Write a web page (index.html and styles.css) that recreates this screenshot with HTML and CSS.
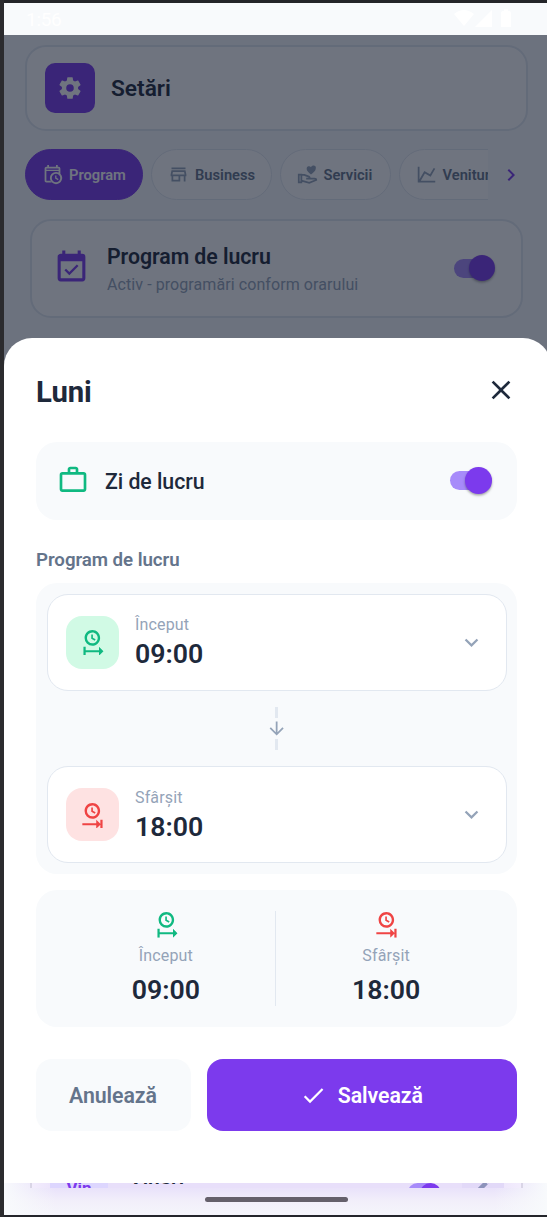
FILE: index.html
```html
<!DOCTYPE html>
<html lang="ro">
<head>
<meta charset="utf-8">
<title>Setări</title>
<link rel="stylesheet" href="styles.css">
</head>
<body>
<svg class="defs" aria-hidden="true">
  <symbol id="clock-start" viewBox="0 0 24 24"><path d="M12 1C8.14 1 5 4.14 5 8A7 7 0 0 0 12 15C15.86 15 19 11.87 19 8C19 4.14 15.86 1 12 1M12 3.15C14.67 3.15 16.85 5.32 16.85 8C16.85 10.68 14.67 12.85 12 12.85A4.85 4.85 0 0 1 7.15 8A4.85 4.85 0 0 1 12 3.15M11 5V8.69L14.19 10.53L14.94 9.23L12.5 7.82V5M4 16V24H6V21H18V24L22 20L18 16V19H6V16"/></symbol>
  <symbol id="clock-end" viewBox="0 0 24 24"><path d="M12 1C8.14 1 5 4.14 5 8A7 7 0 0 0 12 15C15.86 15 19 11.87 19 8C19 4.14 15.86 1 12 1M12 3.15C14.67 3.15 16.85 5.32 16.85 8C16.85 10.68 14.67 12.85 12 12.85A4.85 4.85 0 0 1 7.15 8A4.85 4.85 0 0 1 12 3.15M11 5V8.69L14.19 10.53L14.94 9.23L12.5 7.82V5M3 19H15.5V16L19.2 19.6V16H21.2V24H19.2V20.4L15.5 24V21H3Z"/></symbol>
  <symbol id="chevron-down" viewBox="0 0 24 24"><path d="M7.41,8.58L12,13.17L16.59,8.58L18,10L12,16L6,10L7.41,8.58Z"/></symbol>
</svg>
<div class="phone">
  <header class="status">
    <span class="time">1:56</span>
    <svg class="signals" viewBox="0 0 60 20"><path d="M0 5Q10-3 20 5L10 17ZM21 18L38 1V18ZM47 4Q47 2 49 2H50V.5H54V2H55Q57 2 57 4V18H47Z"/></svg>
  </header>
  <main class="page">
    <section class="title-card">
      <span class="gear"><svg viewBox="0 0 24 24"><path d="M12,15.5A3.5,3.5 0 0,1 8.5,12A3.5,3.5 0 0,1 12,8.5A3.5,3.5 0 0,1 15.5,12A3.5,3.5 0 0,1 12,15.5M19.43,12.97C19.47,12.65 19.5,12.33 19.5,12C19.5,11.67 19.47,11.34 19.43,11L21.54,9.37C21.73,9.22 21.78,8.95 21.66,8.73L19.66,5.27C19.54,5.05 19.27,4.96 19.05,5.05L16.56,6.05C16.04,5.66 15.5,5.32 14.87,5.07L14.5,2.42C14.46,2.18 14.25,2 14,2H10C9.75,2 9.54,2.18 9.5,2.42L9.13,5.07C8.5,5.32 7.96,5.66 7.44,6.05L4.95,5.05C4.73,4.96 4.46,5.05 4.34,5.27L2.34,8.73C2.21,8.95 2.27,9.22 2.46,9.37L4.57,11C4.53,11.34 4.5,11.67 4.5,12C4.5,12.33 4.53,12.65 4.57,12.97L2.46,14.63C2.27,14.78 2.21,15.05 2.34,15.27L4.34,18.73C4.46,18.95 4.73,19.03 4.95,18.95L7.44,17.94C7.96,18.34 8.5,18.68 9.13,18.93L9.5,21.58C9.54,21.82 9.75,22 10,22H14C14.25,22 14.46,21.82 14.5,21.58L14.87,18.93C15.5,18.67 16.04,18.34 16.56,17.94L19.05,18.95C19.27,19.03 19.54,18.95 19.66,18.73L21.66,15.27C21.78,15.05 21.73,14.78 21.54,14.63L19.43,12.97Z"/></svg></span>
      <h1>Setări</h1>
    </section>
    <nav class="tabs">
      <div class="chips">
        <span class="chip active"><svg viewBox="0 0 24 24"><path d="M15,13H16.5V15.82L18.94,17.23L18.19,18.53L15,16.69V13M5,8V19H9.67A7,7 0 0,0 11.1,21H5C3.89,21 3,20.1 3,19V5C3,3.89 3.89,3 5,3H6V1H8V3H16V1H18V3H19A2,2 0 0,1 21,5V11.1A7,7 0 0,1 16,23A7,7 0 0,1 9,16A7,7 0 0,1 16,9C17.07,9 18.09,9.24 19,9.67V8ZM5,5V6.5H19V5ZM16,11.15A4.85,4.85 0 0,0 11.15,16C11.15,18.68 13.32,20.85 16,20.85A4.85,4.85 0 0,0 20.85,16C20.85,13.32 18.68,11.15 16,11.15Z" fill-rule="evenodd"/></svg>Program</span>
        <span class="chip business"><svg viewBox="0 0 24 24"><path d="M18.36 9L18.96 12H5.04L5.64 9H18.36M20 4H4V6H20V4M20 7H4L3 12V14H4V20H14V14H18V20H20V14H21V12L20 7M6 18V14H12V18H6Z"/></svg>Business</span>
        <span class="chip servicii"><svg viewBox="0 0 24 24"><path d="M16 12C13 9.3 11 7.7 11 5.3A2.7 2.7 0 0 1 16 3.8A2.7 2.7 0 0 1 21.4 5.3C21.4 7.7 19 9.3 16 12Z"/><path class="line" d="M2 12H5V21H2ZM5 12.5H8.5L13.5 14.4Q15.2 15.4 14 16.6H10.5M14.5 16.6H20Q22 16.6 22 18.3L14 21.5L5 19"/></svg>Servicii</span>
        <span class="chip venituri"><svg viewBox="0 0 24 24"><path d="M16,11.78L20.24,4.45L21.97,5.45L16.74,14.5L10.23,10.75L5.46,19H22V21H2V3H4V17.54L9.5,8L16,11.78Z"/></svg>Venituri</span>
      </div>
      <svg class="more" viewBox="0 0 24 24"><path d="M8.59,16.58L13.17,12L8.59,7.41L10,6L16,12L10,18L8.59,16.58Z"/></svg>
    </nav>
    <section class="schedule-card">
      <svg class="calendar" viewBox="0 0 24 24"><path d="M19,19H5V8H19M19,3H18V1H16V3H8V1H6V3H5C3.89,3 3,3.9 3,5V19A2,2 0 0,0 5,21H19A2,2 0 0,0 21,19V5A2,2 0 0,0 19,3M16.53,11.06L15.47,10L10.59,14.88L8.47,12.76L7.41,13.82L10.59,17L16.53,11.06Z"/></svg>
      <div class="schedule-text"><h2>Program de lucru</h2><p>Activ - programări conform orarului</p></div>
      <span class="switch"></span>
    </section>
    <div class="scrim"></div>
    <section class="sheet">
      <div class="sheet-head"><h2>Luni</h2><svg viewBox="0 0 24 24"><path d="M19,6.41L17.59,5L12,10.59L6.41,5L5,6.41L10.59,12L5,17.59L6.41,19L12,13.41L17.59,19L19,17.59L13.41,12L19,6.41Z"/></svg></div>
      <div class="workday">
        <svg viewBox="0 0 24 24"><path d="M20,6C20.58,6 21.05,6.2 21.42,6.59C21.8,7 22,7.45 22,8V19C22,19.55 21.8,20 21.42,20.41C21.05,20.8 20.58,21 20,21H4C3.42,21 2.95,20.8 2.58,20.41C2.2,20 2,19.55 2,19V8C2,7.45 2.2,7 2.58,6.59C2.95,6.2 3.42,6 4,6H8V4C8,3.42 8.2,2.95 8.58,2.58C8.95,2.2 9.42,2 10,2H14C14.58,2 15.05,2.2 15.42,2.58C15.8,2.95 16,3.42 16,4V6H20M4,8V19H20V8H4M14,6V4H10V6H14Z"/></svg>
        <span class="workday-label">Zi de lucru</span><span class="switch"></span>
      </div>
      <h3>Program de lucru</h3>
      <div class="hours">
        <div class="slot">
          <span class="tile start"><svg><use href="#clock-start"/></svg></span>
          <div class="slot-text"><small>Început</small><b>09:00</b></div>
          <svg class="chevron"><use href="#chevron-down"/></svg>
        </div>
        <div class="connector"><i></i><svg viewBox="0 0 24 24"><path d="M11,4H13V16L18.5,10.5L19.92,11.92L12,19.84L4.08,11.92L5.5,10.5L11,16V4Z"/></svg><i></i></div>
        <div class="slot">
          <span class="tile end"><svg><use href="#clock-end"/></svg></span>
          <div class="slot-text"><small>Sfârșit</small><b>18:00</b></div>
          <svg class="chevron"><use href="#chevron-down"/></svg>
        </div>
      </div>
      <div class="summary">
        <div class="total start"><svg><use href="#clock-start"/></svg><small>Început</small><b>09:00</b></div>
        <div class="total end"><svg><use href="#clock-end"/></svg><small>Sfârșit</small><b>18:00</b></div>
      </div>
      <div class="actions">
        <button class="cancel">Anulează</button>
        <button class="save"><svg viewBox="0 0 24 24"><path d="M21,7L9,19L3.5,13.5L4.91,12.09L9,16.17L19.59,5.59L21,7Z"/></svg>Salvează</button>
      </div>
    </section>
  </main>
  <footer class="below">
    <div class="peek">
      <div class="peek-row">
        <span class="day">Vin</span><span class="day-name">Vineri</span><span class="switch"></span>
        <span class="edit"><svg viewBox="0 0 24 24"><path d="M3 17.2V21H6.8L17.8 9.9L14 6.2ZM15 5L18.8 8.8L20.7 7Q21.4 6.3 20.7 5.6L18.4 3.3Q17.7 2.6 17 3.3Z"/></svg></span>
      </div>
    </div>
    <div class="home"></div>
  </footer>
</div>
</body>
</html>
```
FILE: styles.css
```css
* { box-sizing: border-box; }
body { margin: 0; width: 547px; height: 1217px; overflow: hidden; background: #2b2b2e; font-family: Roboto, "Liberation Sans", sans-serif; color: #1e293b; }
h1, h2, h3, p { margin: 0; }
svg { display: block; fill: currentColor; flex: none; }
.defs { position: absolute; width: 0; height: 0; }
.phone { margin-left: 4px; width: 547px; height: 1217px; border-top: 3px solid #242529; border-bottom: 2px solid #24252b; background: #f8fafc; }
.status { height: 32px; display: flex; align-items: center; justify-content: space-between; padding: 0 37px 0 22px; color: #fff; }
.time { font-size: 19px; letter-spacing: -.3px; }
.signals { width: 60px; height: 20px; }
.page { position: relative; height: 1148px; padding: 10px 0 0 21px; }

.title-card { width: 503px; height: 86px; border: 2px solid #e2e8f0; border-radius: 21px; background: #fff; display: flex; align-items: center; gap: 16px; padding-left: 18px; }
.gear { width: 50px; height: 50px; border-radius: 10px; background: #7c3aed; color: #fff; display: grid; place-items: center; }
.gear svg { width: 26px; height: 26px; }
h1 { font-size: 22.7px; font-weight: 600; line-height: 30px; padding-top: 2px; }

.tabs { margin-top: 18px; display: flex; align-items: center; }
.chips { width: 463px; display: flex; gap: 8px; overflow: hidden; }
.chip { flex: none; width: 120.5px; height: 51px; border: 1.5px solid #e2e8f0; border-radius: 26px; background: #fff; color: #64748b; display: flex; align-items: center; padding-left: 16px; gap: 6px; font-size: 14.7px; font-weight: 600; }
.chip svg { width: 21px; height: 21px; color: #94a3b8; }
.chip.active { width: 118px; background: #7c3aed; border-color: #7c3aed; color: #fff; }
.chip.active svg { color: #fff; }
.chip.servicii { width: 111px; }
.line { fill: none; stroke: currentColor; stroke-width: 2; }
.more { width: 24px; height: 24px; margin-left: 10.5px; color: #7c3aed; }

.schedule-card { margin: 19px 0 0 5px; width: 493px; height: 99px; border: 2px solid #e2e8f0; border-radius: 21px; background: #fff; display: flex; align-items: center; padding: 0 26px 0 21px; }
.calendar { width: 37px; height: 37px; color: #7c3aed; margin-top: -3px; }
.schedule-text { margin-left: 17px; flex: 1; padding-top: 2px; }
.schedule-text h2 { font-size: 21.3px; line-height: 28px; font-weight: 600; letter-spacing: -.05px; }
.schedule-text p { font-size: 16px; line-height: 22px; margin-top: 3px; color: #94a3b8; letter-spacing: .08px; }
.switch { position: relative; width: 41.5px; height: 27px; display: flex; align-items: center; flex: none; }
.switch::before { content: ""; position: absolute; left: 0; top: 4px; width: 36px; height: 19px; border-radius: 10px; background: #a78bfa; }
.switch::after { content: ""; position: relative; width: 26.5px; height: 26.5px; margin-left: auto; border-radius: 50%; background: #7c3aed; box-shadow: 0 1.5px 2.5px rgba(0,0,0,.35); }
.schedule-card .switch { margin-top: -1px; }
.scrim { position: absolute; inset: 0; background: rgba(15,23,42,.6); }

.sheet { position: absolute; top: 303px; left: 0; right: 0; bottom: 0; border-radius: 28px 28px 0 0; background: #fff; padding: 32px 34px 0 32px; }
.sheet-head { height: 42px; display: flex; align-items: center; justify-content: space-between; }
.sheet-head h2 { font-size: 29.3px; font-weight: 700; letter-spacing: -.1px; padding-top: 1px; }
.sheet-head svg { width: 32px; height: 32px; margin-top: -3px; }
.workday { margin-top: 29.5px; height: 78px; border-radius: 21px; background: #f8fafc; display: flex; align-items: center; padding: 0 25.5px 0 21px; font-size: 21.3px; font-weight: 500; }
.workday > svg { width: 32px; height: 32px; color: #10b981; margin: -1px 16px 0 0; }
.workday-label { padding-top: 2px; letter-spacing: -.05px; }
.workday > .switch { margin-left: auto; }
h3 { margin-top: 28.5px; height: 24px; line-height: 24px; font-size: 18.7px; font-weight: 600; letter-spacing: -.05px; color: #64748b; }
.hours { margin-top: 11px; height: 291px; padding: 10.5px; border-radius: 21px; background: #f8fafc; display: flex; flex-direction: column; justify-content: space-between; }
.slot { height: 97px; border: 1.5px solid #e2e8f0; border-radius: 21px; background: #fff; display: flex; align-items: center; padding: 0 18px; }
.tile { width: 53px; height: 53px; border-radius: 16px; display: grid; place-items: center; }
.tile svg, .total svg { width: 26.7px; height: 26.7px; }
.start { color: #10b981; }
.end { color: #ef4444; }
.tile.start { background: #d1fae5; }
.tile.end { background: #fee2e2; }
.slot-text { margin-left: 16.5px; flex: 1; display: flex; flex-direction: column; padding-top: 2px; }
small { font-size: 16px; line-height: 22px; color: #94a3b8; letter-spacing: .15px; }
b { font-size: 26.7px; line-height: 35px; font-weight: 600; color: #1e293b; }
.slot-text b { margin-top: 1px; }
.chevron { width: 27px; height: 27px; color: #94a3b8; margin-right: 3px; }
.connector { display: flex; flex-direction: column; align-items: center; }
.connector i { width: 3px; height: 10.7px; background: #e2e8f0; }
.connector svg { width: 21.3px; height: 21.3px; color: #94a3b8; }
.summary { margin-top: 16px; height: 137px; padding: 21px 20px; border-radius: 21px; background: #f8fafc; display: flex; }
.total { flex: 1 1 0; display: flex; flex-direction: column; align-items: center; height: 95px; }
.total + .total { border-left: 1.3px solid #e2e8f0; margin-right: 1px; margin-left: 0; }
.total:first-child { margin-right: -.5px; }
.total small { margin-top: 7px; }
.total b { margin-top: 6px; }
.actions { margin-top: 32px; display: flex; gap: 16px; }
button { border: 0; border-radius: 16px; height: 72px; font: 600 21.3px Roboto, "Liberation Sans", sans-serif; letter-spacing: -.05px; display: flex; align-items: center; justify-content: center; padding: 1px 0 0; }
.cancel { width: 155px; background: #f8fafc; color: #64748b; padding-right: 1px; }
.save { flex: 1; background: #7c3aed; color: #fff; gap: 11px; padding-right: 1px; }
.save svg { width: 26.7px; height: 26.7px; }

.below { height: 32px; overflow: hidden; background: linear-gradient(90deg, #f8fafc 0, rgba(248,250,252,0) 52px, rgba(248,250,252,0) 490px, #f8fafc 543px), linear-gradient(#e6dcfa 0, #ebe5fa 8px, #f2effa 18px, #f5f5fb 32px); }
.peek { margin-left: 26px; width: 493px; height: 5px; }
.peek-row { height: 5px; overflow: hidden; border: solid #d9d5e6; border-width: 0 2px; background: linear-gradient(90deg, #f3edfd, #e8dffa 30px, #e8dffa 450px, #f3edfd); display: flex; align-items: flex-start; }
.day { width: 58px; height: 5px; margin-left: 18px; background: #ddd6fe; color: #7c3aed; font-size: 17px; line-height: 10px; text-align: center; font-weight: 700; }
.day-name { margin-left: 21px; font-size: 21px; line-height: 25px; font-weight: 600; margin-top: -18px; }
.peek .switch { margin: 0 21px 0 auto; width: 33px; height: 19px; align-items: flex-start; }
.peek .switch::before { top: 0; width: 30px; }
.peek .switch::after { width: 21px; height: 21px; box-shadow: none; }
.edit { width: 42px; height: 5px; background: #e2d9f8; margin-right: 17px; color: #8d93bb; }
.edit svg { width: 20px; height: 20px; margin: -7px auto 0; }
.home { width: 143px; height: 5px; margin: 9px 0 0 201px; border-radius: 3px; background: #65606b; }
```
